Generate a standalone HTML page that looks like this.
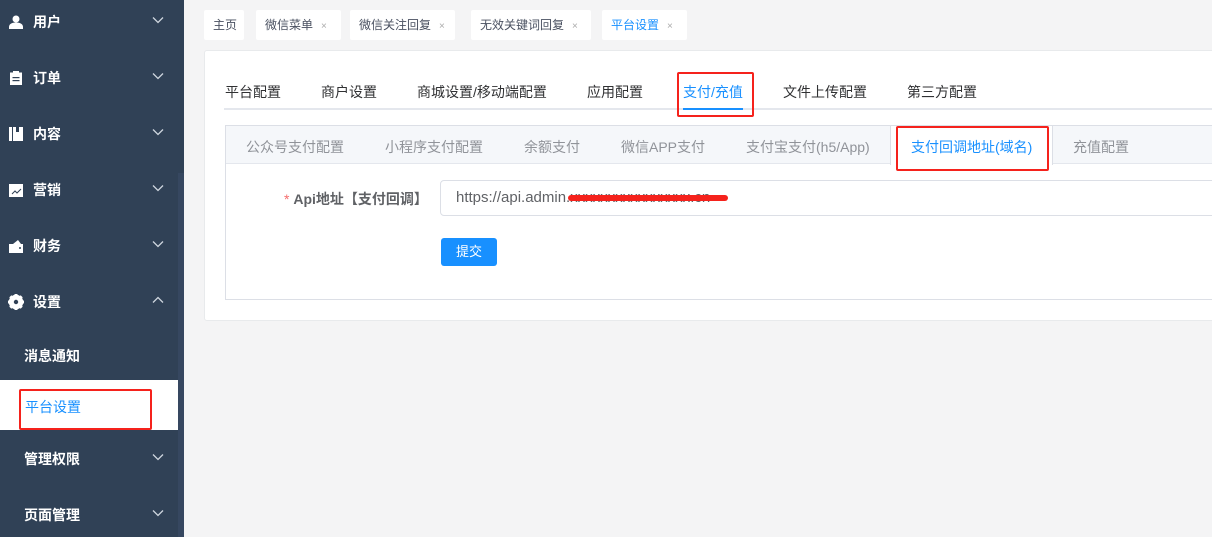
<!DOCTYPE html><html><head><meta charset="utf-8"><style>
*{margin:0;padding:0;box-sizing:border-box}
body{width:1212px;height:537px;overflow:hidden;background:#f4f4f5;font-family:"Liberation Sans","Noto Sans CJK SC",sans-serif;position:relative}
.sb{position:absolute;left:0;top:0;width:184px;height:537px;background:#304156}
.sb .scr{position:absolute;left:178px;top:173px;width:6px;height:364px;background:#364760}
.it{position:absolute;left:0;width:178px;color:#fff;font-size:14px;font-weight:bold;height:20px;line-height:20px}
.it .ic{position:absolute;left:9px;top:3px;width:14px;height:14px}
.it .tx{position:absolute;left:33px}
.it .ch{position:absolute;left:152px;top:4px;width:12px;height:8px}
.sub{position:absolute;left:24px;color:#fff;font-size:14px;font-weight:bold}
.act{position:absolute;left:0;top:380px;width:178px;height:50px;background:#fff}
.red{position:absolute;border:2px solid #f5221c;border-radius:2px}
.tag{position:absolute;top:10px;height:30px;background:#fff;border-radius:2px;font-size:12px;color:#495060;line-height:30px;padding-left:9px}
.tag i{font-style:normal;color:#aaa;font-size:10px;margin-left:8px}
.card{position:absolute;left:204px;top:50px;width:1020px;height:271px;background:#fff;border:1px solid #e8eaec;border-radius:3px}
.t1{position:absolute;top:82px;font-size:14px;color:#303133}
.t2{position:absolute;top:137px;font-size:14px;color:#909399}
</style></head><body>
<div class="sb"><div class="scr"></div>
<div class="it" style="top:12px"><svg class="ic" viewBox="0 0 14 14"><circle cx="7" cy="4" r="3.5" fill="#fff"/><path d="M0 14v-2c0-3 3-4.5 7-4.5s7 1.5 7 4.5v2z" fill="#fff"/></svg><span class="tx">用户</span><svg class="ch" viewBox="0 0 12 8"><path d="M1 1.5l5 5 5-5" stroke="#cfd6df" stroke-width="1.3" fill="none"/></svg></div>
<div class="it" style="top:68px"><svg class="ic" viewBox="0 0 14 14"><rect x="1" y="1.5" width="12" height="12.5" fill="#fff"/><rect x="4" y="0" width="6" height="3" fill="#fff"/><rect x="3.5" y="6" width="7" height="1.2" fill="#304156"/><rect x="3.5" y="9" width="7" height="1.2" fill="#304156"/></svg><span class="tx">订单</span><svg class="ch" viewBox="0 0 12 8"><path d="M1 1.5l5 5 5-5" stroke="#cfd6df" stroke-width="1.3" fill="none"/></svg></div>
<div class="it" style="top:124px"><svg class="ic" viewBox="0 0 14 14"><rect x="0" y="0" width="3" height="14" fill="#fff"/><rect x="4" y="0" width="10" height="14" fill="#fff"/><rect x="7" y="0" width="3" height="5" fill="#304156"/></svg><span class="tx">内容</span><svg class="ch" viewBox="0 0 12 8"><path d="M1 1.5l5 5 5-5" stroke="#cfd6df" stroke-width="1.3" fill="none"/></svg></div>
<div class="it" style="top:180px"><svg class="ic" viewBox="0 0 14 14"><rect x="0" y="1" width="14" height="13" fill="#fff"/><path d="M3 11l3-3 2 2 4-4" stroke="#304156" fill="none"/></svg><span class="tx">营销</span><svg class="ch" viewBox="0 0 12 8"><path d="M1 1.5l5 5 5-5" stroke="#cfd6df" stroke-width="1.3" fill="none"/></svg></div>
<div class="it" style="top:236px"><svg class="ic" viewBox="0 0 14 14"><rect x="0" y="5" width="14" height="9" fill="#fff"/><path d="M4 5l5-4 3 4z" fill="#fff"/><circle cx="11" cy="9" r="1" fill="#304156"/></svg><span class="tx">财务</span><svg class="ch" viewBox="0 0 12 8"><path d="M1 1.5l5 5 5-5" stroke="#cfd6df" stroke-width="1.3" fill="none"/></svg></div>
<div class="it" style="top:292px"><svg class="ic" viewBox="0 0 16 16" style="left:8px;width:16px;height:16px;top:2px"><circle cx="8" cy="8" r="5.5" fill="none" stroke="#fff" stroke-width="3.5"/><path d="M8 0v16M0 8h16M2.3 2.3l11.4 11.4M13.7 2.3L2.3 13.7" stroke="#fff" stroke-width="3"/><circle cx="8" cy="8" r="2.2" fill="#304156"/></svg><span class="tx">设置</span><svg class="ch" viewBox="0 0 12 8"><path d="M1 6.5l5-5 5 5" stroke="#cfd6df" stroke-width="1.3" fill="none"/></svg></div>
<div class="sub" style="top:346px">消息通知</div>
<div class="act"></div>
<div class="sub" style="top:397px;color:#1890ff;font-weight:normal;left:25px">平台设置</div>
<div class="it" style="top:449px"><span class="tx" style="left:24px">管理权限</span><svg class="ch" viewBox="0 0 12 8"><path d="M1 1.5l5 5 5-5" stroke="#cfd6df" stroke-width="1.3" fill="none"/></svg></div>
<div class="it" style="top:505px"><span class="tx" style="left:24px">页面管理</span><svg class="ch" viewBox="0 0 12 8"><path d="M1 1.5l5 5 5-5" stroke="#cfd6df" stroke-width="1.3" fill="none"/></svg></div>
</div>
<div class="red" style="left:19px;top:389px;width:133px;height:41px"></div>

<div class="tag" style="left:204px;width:40px">主页</div>
<div class="tag" style="left:256px;width:85px">微信菜单<i>×</i></div>
<div class="tag" style="left:350px;width:105px">微信关注回复<i>×</i></div>
<div class="tag" style="left:471px;width:120px">无效关键词回复<i>×</i></div>
<div class="tag" style="left:602px;width:85px;color:#1890ff">平台设置<i>×</i></div>

<div class="card"></div>
<div class="t1" style="left:225px">平台配置</div>
<div class="t1" style="left:321px">商户设置</div>
<div class="t1" style="left:417px">商城设置/移动端配置</div>
<div class="t1" style="left:587px">应用配置</div>
<div class="t1" style="left:683px;color:#1890ff">支付/充值</div>
<div class="t1" style="left:783px">文件上传配置</div>
<div class="t1" style="left:907px">第三方配置</div>
<div style="position:absolute;left:224px;top:108px;width:988px;height:2px;background:#e4e7ed"></div>
<div style="position:absolute;left:683px;top:108px;width:60px;height:2px;background:#1890ff"></div>
<div class="red" style="left:677px;top:72px;width:77px;height:45px"></div>

<div style="position:absolute;left:225px;top:125px;width:990px;height:175px;border:1px solid #dcdfe6;background:#fff"></div>
<div style="position:absolute;left:226px;top:126px;width:989px;height:38px;background:#f5f7fa;border-bottom:1px solid #e4e7ed"></div>
<div style="position:absolute;left:890px;top:126px;width:163px;height:39px;background:#fff;border-left:1px solid #dcdfe6;border-right:1px solid #dcdfe6"></div>
<div class="t2" style="left:246px">公众号支付配置</div>
<div class="t2" style="left:385px">小程序支付配置</div>
<div class="t2" style="left:524px">余额支付</div>
<div class="t2" style="left:621px">微信APP支付</div>
<div class="t2" style="left:746px">支付宝支付(h5/App)</div>
<div class="t2" style="left:911px;color:#1890ff">支付回调地址(域名)</div>
<div class="t2" style="left:1073px">充值配置</div>
<div class="red" style="left:896px;top:126px;width:153px;height:45px"></div>

<div style="position:absolute;left:284px;top:189px;font-size:14px;font-weight:bold;color:#606266"><span style="color:#f56c6c;font-weight:normal">* </span>Api地址【支付回调】</div>
<div style="position:absolute;left:440px;top:180px;width:780px;height:36px;border:1px solid #dcdfe6;border-radius:4px;font-size:15px;color:#606266;line-height:34px;padding-left:15px">https://api.admin.xxxxxxxxxxxxxxxx.cn</div>
<div style="position:absolute;left:568px;top:195px;width:160px;height:6px;background:#f5221c;border-radius:3px"></div>
<div style="position:absolute;left:441px;top:238px;width:56px;height:28px;background:#1890ff;border-radius:3px;color:#fff;font-size:13px;text-align:center;line-height:28px">提交</div>
</body></html>
